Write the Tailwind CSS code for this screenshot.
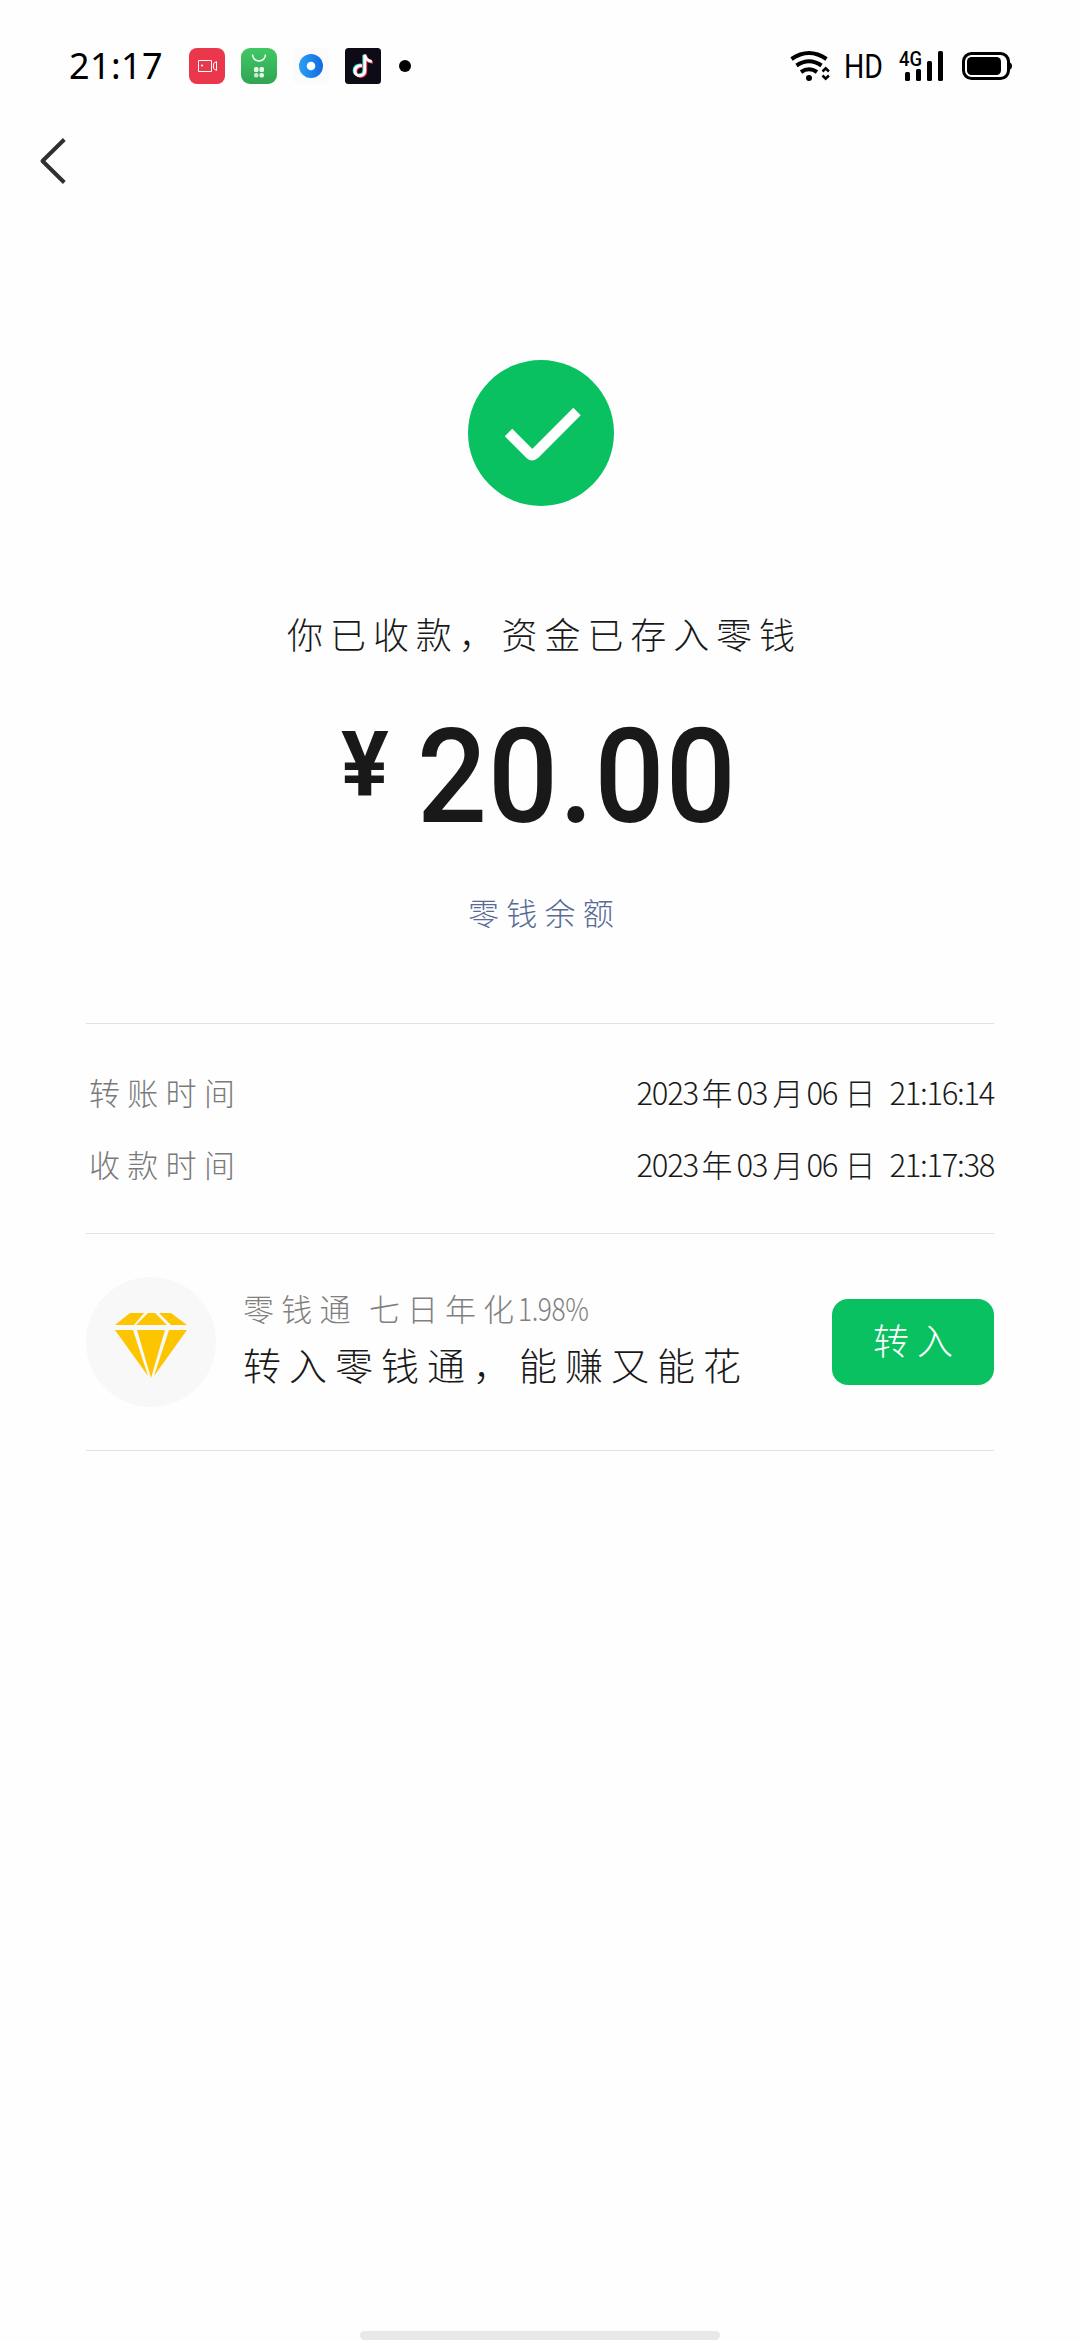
<!DOCTYPE html>
<html lang="zh-CN">
<head>
<meta charset="utf-8">
<title>收款详情</title>
<script src="https://cdn.jsdelivr.net/npm/@tailwindcss/browser@4"></script>
</head>
<body class="bg-[#fefefe]">
<div class="flex h-[2340px] w-[1080px] flex-col overflow-hidden bg-[#fefefe] font-['Noto_Sans_CJK_SC',sans-serif] font-light text-[#191919]">
  <!-- Status bar -->
  <header class="flex h-[132px] items-center justify-between pl-[69px] pr-[67px]">
    <div class="flex items-center">
      <span class="w-[120px] whitespace-nowrap font-['Noto_Sans',sans-serif] text-[36px] font-normal leading-[40px] tracking-[0.4px] text-black">21:17</span>
      <svg class="h-9 w-9" viewBox="0 0 36 36"><rect width="36" height="36" rx="8" fill="#eb374b"/><g fill="none" stroke="#fff" stroke-width="1"><path d="M9.500 12.500h13v11h-13zM27.500 13.500v9l-3-2v-5z"/></g><circle cx="13" cy="17.500" r="1" fill="#fff"/></svg>
      <svg class="ml-4 h-9 w-9" viewBox="0 0 36 36"><defs><linearGradient id="mk" x2="0" y2="1"><stop stop-color="#40c865"/><stop offset="1" stop-color="#30a553"/></linearGradient></defs><rect width="36" height="36" rx="9" fill="url(#mk)"/><path d="M11.500 6.500a6.500 6.500 0 0 0 13 0" fill="none" stroke="#fff" stroke-width="1.500"/><g fill="#e9f8ec"><rect x="13" y="19" width="4.500" height="5" rx="1.500"/><rect x="18.500" y="19" width="4.500" height="5" rx="1.500"/><rect x="13" y="25" width="4.500" height="4.500" rx="1.800" opacity=".8"/><rect x="18.500" y="25" width="4.500" height="4.500" rx="1.800"/></g></svg>
      <svg class="ml-4 h-9 w-9" viewBox="0 0 36 36"><defs><linearGradient id="bl" x1="0" x2="1"><stop stop-color="#2aa0f3"/><stop offset="1" stop-color="#116be0"/></linearGradient></defs><rect width="36" height="36" rx="6" fill="#fbfbfb"/><circle cx="18" cy="18" r="12" fill="url(#bl)"/><circle cx="18" cy="18" r="4.300" fill="#fff"/></svg>
      <svg class="ml-4 h-9 w-9" viewBox="0 0 36 36"><rect width="36" height="36" rx="3.500" fill="#0c0b16"/><g fill="none" stroke-width="2.800"><path d="M16 17c-4-.5-7 2-7 5.200 0 3 2.300 4.800 4.800 4.800 3 0 5-2 5-5V7c.5 3.500 3 6 7 6.300" stroke="#3fe3de"/><path d="M18 18.500c-4-.5-7 2-7 5.200 0 3 2.300 4.800 4.800 4.800 3 0 5-2 5-5V8c.5 3.500 3 6 7 6.300" stroke="#f5425f"/><path d="M17 17.700c-4-.5-7 2-7 5.200 0 3 2.300 4.800 4.800 4.800 3 0 5-2 5-5V6.500c.5 4 3 6.500 7 6.800" stroke="#fff"/></g></svg>
      <span class="ml-[18px] h-3 w-3 rounded-full bg-black"></span>
    </div>
    <svg class="h-10 w-[224px]" viewBox="788 46 224 40" fill="none" stroke="#000">
      <g stroke-width="4"><path d="M790.500 59q17.500-12 35 0"/><path d="M795.500 65.500q12.500-8.500 25 0"/><path d="M800 72q8-5.500 16 0"/></g>
      <circle cx="808" cy="78" r="3" fill="#000" stroke="none"/>
      <path d="M821.500 71.500l3.200-3.200 3.200 3.200M821.500 75.500l3.200 3.200 3.200-3.200" stroke-width="2.500"/>
      <g fill="#000" stroke="none" font-family="Roboto, sans-serif">
        <text x="843" y="78" font-size="34" font-weight="400" textLength="39" lengthAdjust="spacingAndGlyphs">HD</text>
        <text x="898" y="66" font-size="20" font-weight="500" textLength="23" lengthAdjust="spacingAndGlyphs">4G</text>
        <rect x="904" y="72" width="5" height="9" rx="1.500"/><rect x="915" y="69" width="5" height="12" rx="1.500"/><rect x="926" y="61" width="5" height="20" rx="1.500"/><rect x="937" y="51" width="5" height="30" rx="1.500"/>
        <rect x="966" y="57" width="34" height="18" rx="4.500"/><path d="M1008 62q3 1 3 4t-3 4z"/>
      </g>
      <rect x="962.500" y="53.500" width="45" height="25" rx="8" stroke-width="3"/>
    </svg>
  </header>

  <!-- Navigation -->
  <nav class="flex h-[58px] items-center pl-[38px]">
    <svg class="h-[50px] w-7" viewBox="0 0 28 50" fill="none" stroke="#303030" stroke-width="4"><path d="M26.300 3.500L4.500 25l21.800 21.500" stroke-linejoin="round"/></svg>
  </nav>

  <main class="flex flex-col items-center px-[86px] pt-[170px]">
    <svg class="ml-[1px] h-[146px] w-[146px]" viewBox="0 0 146 146"><circle cx="73" cy="73" r="73" fill="#09c160"/><path d="M40.500 72.500L62.200 94.200q2 2 4.200 0L109 51.500" fill="none" stroke="#fff" stroke-width="10.500" stroke-linejoin="round"/></svg>

    <h1 class="mt-[101px] h-[52px] whitespace-nowrap pl-[9px] text-[36px] font-light leading-[52px] tracking-[6.900px]">你已收款，资金已存入零钱</h1>

    <div class="mt-[48px] flex h-[140px] w-[402px] items-start whitespace-nowrap pl-[2px] font-['Roboto',sans-serif]">
      <span class="w-[76px] shrink-0 pt-[4px] text-[91px] leading-[108px]"><span class="inline-block origin-left scale-x-[0.980] font-bold">¥</span></span>
      <span class="shrink-0 origin-left scale-x-[0.940] text-[131px] font-medium leading-[140px] tracking-[1.200px]">20.00</span>
    </div>

    <a class="mt-[42px] h-[46px] whitespace-nowrap pl-[9px] text-[31px] leading-[46px] tracking-[7.300px] text-[#576b95]">零钱余额</a>

    <section class="mt-[88px] flex h-[211px] w-full flex-col border-y-[1px] border-[#e2e2e2] pt-[32px] text-[31px]">
      <div class="flex h-[72px] items-center justify-between whitespace-nowrap">
        <span class="pl-[3px] tracking-[7.300px] text-[#7a7a7a]">转账时间</span>
        <span class="flex tracking-[-1.200px]"><span class="w-[65px]">2023</span><span class="w-[35px]">年</span><span class="w-[36px]">03</span><span class="w-[34px]">月</span><span class="w-[38px]">06</span><span class="w-[45px]">日</span><span class="tracking-[-1.300px]">21:16:14</span></span>
      </div>
      <div class="flex h-[72px] items-center justify-between whitespace-nowrap">
        <span class="pl-[3px] tracking-[7.300px] text-[#7a7a7a]">收款时间</span>
        <span class="flex tracking-[-1.200px]"><span class="w-[65px]">2023</span><span class="w-[35px]">年</span><span class="w-[36px]">03</span><span class="w-[34px]">月</span><span class="w-[38px]">06</span><span class="w-[45px]">日</span><span class="tracking-[-1.300px]">21:17:38</span></span>
      </div>
    </section>

    <section class="flex h-[217px] w-full items-center border-b border-[#e2e2e2] whitespace-nowrap">
      <div class="flex h-[130px] w-[130px] shrink-0 items-center justify-center rounded-full bg-[#f8f8f8]">
        <svg class="mt-[7px] h-[66px] w-[74px]" viewBox="0 0 74 66" fill="#fdc500"><path d="M16 0h14L20 12H1zM34 0h7l12 12H22zM45 0h12l16 12H57zM1 17h18l15 46zM23 17h28L37 65zM55 17h18L40 63z"/></svg>
      </div>
      <div class="ml-[27px] flex flex-1 flex-col pb-[8px]">
        <p class="flex h-[50px] items-center text-[31px] font-light text-[#808080]"><span class="w-[126px] tracking-[7.300px]">零钱通</span><span class="w-[149px] tracking-[7px]">七日年化</span><span class="origin-left scale-x-[0.850] tracking-[-0.500px]">1.98%</span></p>
        <p class="flex h-[60px] items-center text-[38px] tracking-[8px]">转入零钱通，能赚又能花</p>
      </div>
      <button class="flex h-[86px] w-[162px] shrink-0 items-center justify-center rounded-[16px] bg-[#09c160] pb-[6px] pl-[8px] text-[36px] font-light tracking-[8px] text-white">转入</button>
    </section>
  </main>

  <footer class="mt-auto flex h-[9px] justify-center"><span class="h-[9px] w-[360px] rounded-full bg-[#e8e8e8]"></span></footer>
</div>
</body>
</html>
